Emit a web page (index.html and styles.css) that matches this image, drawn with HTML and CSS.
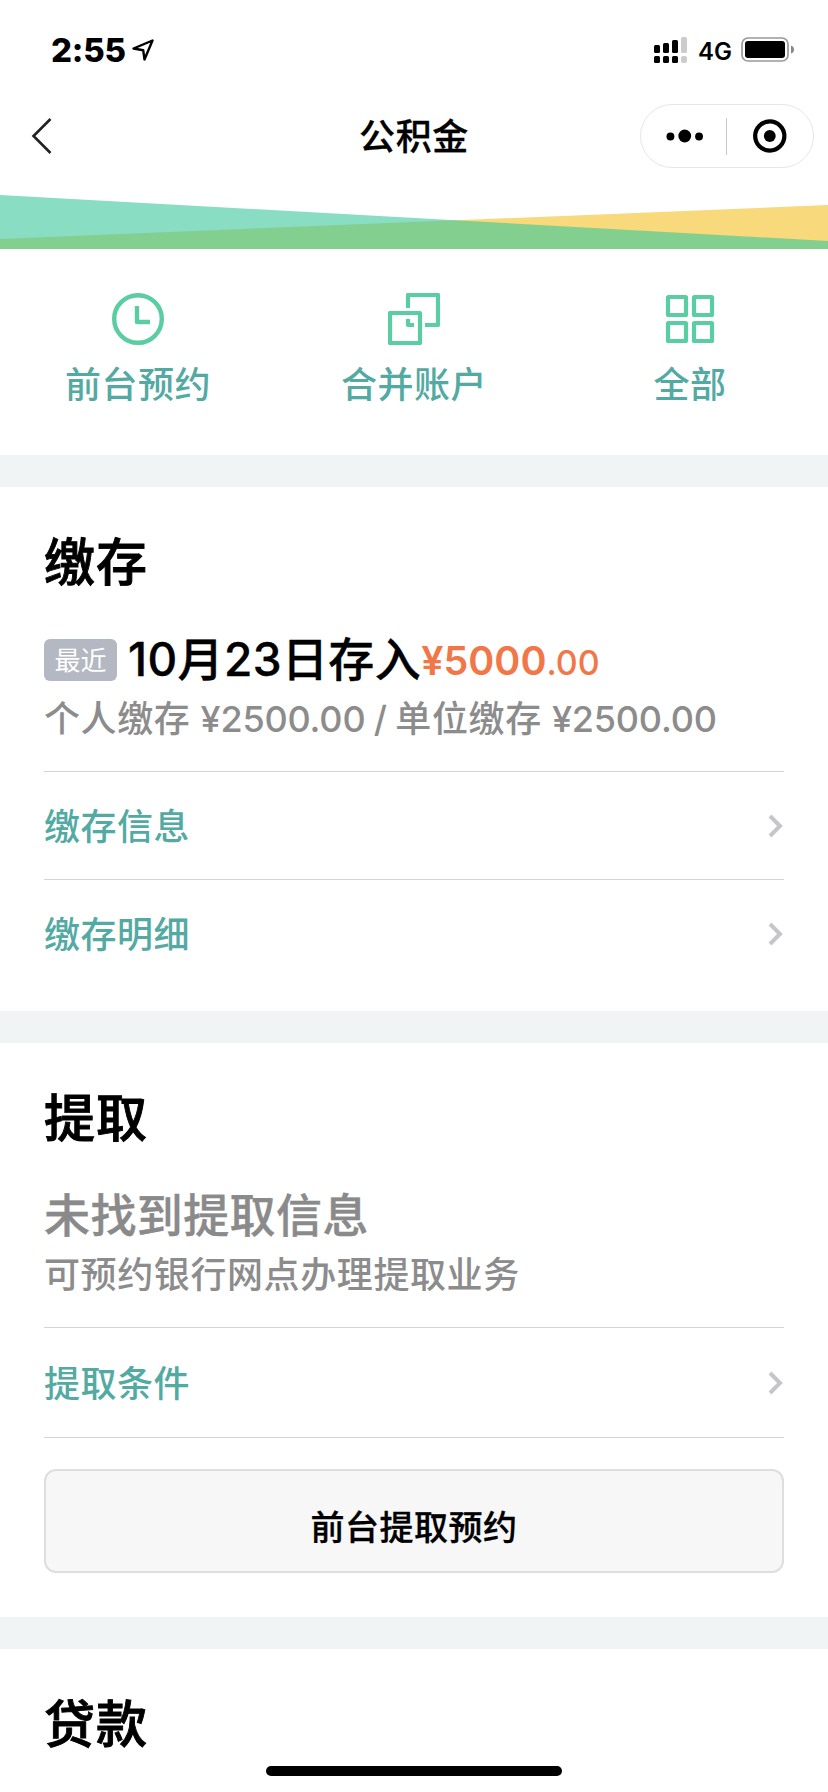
FILE: index.html
```html
<!DOCTYPE html>
<html lang="zh-CN">
<head>
<meta charset="utf-8">
<title>公积金</title>
<link rel="stylesheet" href="styles.css">
</head>
<body>
<div class="screen">
  <header class="status-bar">
    <span class="time">2:55</span>
    <svg class="location" width="24" height="24" viewBox="0 0 24 24"><path d="M2.500 10.500 21.500 2.500 13.500 21.500 12.200 12.200Z" fill="none" stroke="#000" stroke-width="2.400" stroke-linejoin="round"/></svg>
    <span class="spacer"></span>
    <svg class="signal" width="34" height="28" viewBox="0 0 34 28">
      <g fill="#000"><rect y="9" width="6" height="8" rx="1.500"/><rect x="9" y="7" width="6" height="10" rx="1.500"/><rect x="18" y="4" width="6" height="13" rx="1.500"/><rect y="20" width="6" height="7" rx="1.500"/><rect x="9" y="20" width="6" height="7" rx="1.500"/><rect x="18" y="20" width="6" height="7" rx="1.500"/></g>
      <g fill="#ccc"><rect x="27" y="1" width="6" height="16" rx="1.500"/><rect x="27" y="20" width="6" height="7" rx="2"/></g>
    </svg>
    <span class="network">4G</span>
    <svg class="battery" width="54" height="26" viewBox="0 0 54 26"><rect x="1" y="1" width="46" height="23" rx="6" fill="none" stroke="#999" stroke-width="1.700"/><rect x="4" y="4" width="40" height="17" rx="3" fill="#000"/><path d="M50 8.500Q53 9.500 53 12.500T50 16.500Z" fill="#888"/></svg>
  </header>

  <nav class="nav-bar">
    <svg class="back" width="22" height="38" viewBox="0 0 22 38"><path d="M19.500 2 2.500 19 19.500 36" fill="none" stroke="#222" stroke-width="2.600"/></svg>
    <h1 class="nav-title">公积金</h1>
    <div class="capsule">
      <svg class="dots" width="38" height="14" viewBox="0 0 38 14"><circle cx="4.500" cy="7.500" r="4"/><circle cx="19" cy="7" r="6.500"/><circle cx="33.500" cy="7.500" r="4"/></svg>
      <span class="capsule-line"></span>
      <svg class="target" width="34" height="34" viewBox="0 0 34 34"><circle cx="17" cy="17" r="14.800" fill="none" stroke="#000" stroke-width="4.300"/><circle cx="17" cy="17" r="6"/></svg>
    </div>
  </nav>

  <svg class="banner" width="828" height="54" viewBox="0 0 828 54"><path d="M0 0 455.400 25.300V54H0Z" fill="#88ddc3"/><path d="M828 10V54H455.400V25.300Z" fill="#f8d97b"/><path d="M0 44 455.400 25.300 828 46V54H0Z" fill="#83cf8f"/></svg>

  <section class="services">
    <a class="service">
      <svg width="52" height="52" viewBox="0 0 52 52" fill="none" stroke="#5bcda2" stroke-width="4.400"><circle cx="26" cy="26" r="23.800"/><path d="M25 13V29H38" stroke-linejoin="round"/></svg>
      <span>前台预约</span>
    </a>
    <a class="service">
      <svg width="52" height="52" viewBox="0 0 52 52" fill="none" stroke="#5bcda2" stroke-width="4.200" stroke-linejoin="round"><rect x="2" y="20" width="30" height="30"/><path d="M20 15V2H50V32H37M20 26V32H26"/></svg>
      <span>合并账户</span>
    </a>
    <a class="service">
      <svg width="52" height="52" viewBox="0 0 52 52" fill="none" stroke="#5bcda2" stroke-width="4.200" stroke-linejoin="round"><rect x="4" y="4" width="18" height="18" rx=".5"/><rect x="30" y="4" width="18" height="18" rx=".5"/><rect x="4" y="30" width="18" height="18" rx=".5"/><rect x="30" y="30" width="18" height="18" rx=".5"/></svg>
      <span>全部</span>
    </a>
  </section>

  <section class="card deposit">
    <h2>缴存</h2>
    <div class="latest"><span class="tag">最近</span><span class="headline">10月23日存入</span><span class="amount">¥5000<small>.00</small></span></div>
    <p class="detail">个人缴存 <span class="figure">¥2500.00 / </span>单位缴存 <span class="figure">¥2500.00</span></p>
    <a class="row"><span>缴存信息</span><svg width="16" height="24" viewBox="0 0 16 24"><path d="M2 2 12 12 2 22" fill="none" stroke="#c6c6ca" stroke-width="4"/></svg></a>
    <a class="row"><span>缴存明细</span><svg width="16" height="24" viewBox="0 0 16 24"><path d="M2 2 12 12 2 22" fill="none" stroke="#c6c6ca" stroke-width="4"/></svg></a>
  </section>

  <section class="card withdraw">
    <h2>提取</h2>
    <div class="latest"><span class="headline muted">未找到提取信息</span></div>
    <p class="detail">可预约银行网点办理提取业务</p>
    <a class="row"><span>提取条件</span><svg width="16" height="24" viewBox="0 0 16 24"><path d="M2 2 12 12 2 22" fill="none" stroke="#c6c6ca" stroke-width="4"/></svg></a>
    <div class="action"><button class="button">前台提取预约</button></div>
  </section>

  <section class="card loan">
    <h2>贷款</h2>
  </section>
  <div class="home-indicator"></div>
</div>
</body>
</html>
```
FILE: styles.css
```css
* { box-sizing: border-box; }
body { margin: 0; background: #fff; }
.screen {
  position: relative;
  width: 828px;
  height: 1792px;
  overflow: hidden;
  background: #fff;
  color: #000;
  font-family: Inter, "Noto Sans CJK SC", sans-serif;
  white-space: nowrap;
}
.status-bar {
  display: flex;
  align-items: center;
  height: 100px;
  padding: 0 33px 0 51px;
}
.time { font-size: 33px; font-weight: 800; letter-spacing: -.2px; }
.location { margin-left: 5px; }
.spacer { flex: 1; }
.network { margin: 2px 9px 0 10px; font-size: 24px; font-weight: 600; }

.nav-bar {
  display: grid;
  grid-template-columns: 1fr auto 1fr;
  align-items: center;
  height: 72px;
  padding: 0 14px 0 31px;
}
.nav-title { margin: 1px 0 0 -17px; font-size: 36px; line-height: 50px; font-weight: 500; letter-spacing: .6px; -webkit-text-stroke: .3px; }
.capsule {
  display: flex;
  align-items: center;
  justify-self: end;
  width: 174px;
  height: 64px;
  padding: 0 26px 0 25px;
  border: 1px solid #e6e6e6;
  border-radius: 32px;
}
.capsule-line { width: 1px; height: 37px; margin: 0 26px 0 23px; background: #c8c8c8; }

.banner { display: block; margin-top: 23px; }

.services {
  display: grid;
  grid-template-columns: repeat(3, 1fr);
  height: 206px;
  padding-top: 44px;
}
.service {
  display: flex;
  flex-direction: column;
  align-items: center;
  gap: 15px;
  color: #53aaa3;
  font-size: 36px;
  font-weight: 500;
  line-height: 50px;
  letter-spacing: .5px;
}

.card {
  padding: 44px 44px 0;
  border-top: 32px solid #f0f4f5;
}
.deposit { height: 556px; }
.withdraw { height: 606px; }
.loan { height: 175px; }
.card h2 { margin: 0; font-size: 51px; line-height: 64px; font-weight: 500; letter-spacing: 1px; -webkit-text-stroke: .9px; }
.latest { display: flex; height: 60px; margin-top: 36px; }
.tag {
  width: 73px;
  height: 42px;
  margin: 8px 11px 0 0;
  border-radius: 6px;
  background: #b3b8c2;
  color: #fff;
  font-size: 26px;
  line-height: 43px;
  text-align: center;
}
.headline { font-size: 46px; line-height: 56px; font-weight: 500; letter-spacing: .4px; -webkit-text-stroke: .4px; }
.muted { color: #8a8a8a; }
.amount { color: #f17748; font-size: 39.5px; line-height: 60px; font-weight: 600; }
.amount small { font-size: 34px; font-weight: 500; }
.detail { height: 50px; margin: 0; color: #8c8c8c; font-size: 36px; font-weight: 500; line-height: 56px; letter-spacing: .6px; }
.figure { letter-spacing: -.2px; word-spacing: -1px; }
.row {
  display: flex;
  align-items: center;
  justify-content: space-between;
  height: 108px;
  border-top: 1px solid #d2d4d5;
  color: #53aaa3;
  font-size: 36px;
  font-weight: 500;
  letter-spacing: .5px;
}
.row span { padding-bottom: 3px; }
.detail + .row { margin-top: 30px; }
.withdraw .row { height: 110px; }
.action { padding-top: 31px; border-top: 1px solid #d2d4d5; }
.button {
  display: block;
  width: 740px;
  height: 104px;
  padding: 9px 0 0;
  border: 2px solid #dedede;
  border-radius: 12px;
  background: #f7f7f7;
  color: #000;
  font: 500 34px Inter, "Noto Sans CJK SC", sans-serif;
  letter-spacing: .5px;
  -webkit-text-stroke: .3px;
}
.home-indicator {
  position: absolute;
  bottom: 16px;
  left: 266px;
  width: 296px;
  height: 10px;
  border-radius: 5px;
  background: #000;
}
```
